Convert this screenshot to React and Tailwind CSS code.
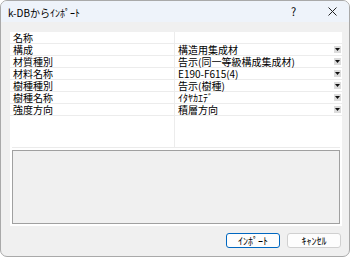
import React from "react";

const rows = [
  ["構成", "構造用集成材"],
  ["材質種別", "告示(同一等級構成集成材)"],
  ["材料名称", "E190-F615(4)"],
  ["樹種種別", "告示(樹種)"],
  ["樹種名称", "ｲﾀﾔｶｴﾃﾞ"],
  ["強度方向", "積層方向"],
];

function Arrow() {
  return (
    <div className="w-[7px] h-[7px] bg-[#dcdcdc] flex items-center justify-center mr-[1px] shrink-0">
      <svg width="5" height="3" viewBox="0 0 5 3">
        <path d="M0 0H5L2.5 3Z" fill="#111" />
      </svg>
    </div>
  );
}

export default function App() {
  const font = { fontFamily: '"Noto Sans CJK JP", "Noto Sans", sans-serif' };
  return (
    <div className="w-[350px] h-[257px] bg-white" style={font}>
      <div className="w-[350px] h-[257px] border border-[#a9a9a9] rounded-[7px] overflow-hidden flex flex-col bg-[#f0f0f0]">
        <div className="h-[21px] bg-[#eef3fa] flex items-center text-[10px] text-black pl-[7px] shrink-0">
          <span className="flex-1 leading-[11px] pt-[1px]">k-DBからｲﾝﾎﾟｰﾄ</span>
          <span className="text-[11px] w-[8px] mr-[29px] leading-[11px]">?</span>
          <svg width="9" height="9" viewBox="0 0 9 9" className="mr-[12px]">
            <path d="M0.5 0.5L8.5 8.5M8.5 0.5L0.5 8.5" stroke="#222" strokeWidth="1" />
          </svg>
        </div>
        <div className="flex-1 flex flex-col pl-[9px] pr-[7px] pt-[10px]">
          <div className="bg-white h-[194px] flex flex-col">
            <div className="h-[115px] flex flex-col text-[10px] leading-[10px] text-black">
              <div className="h-[12px] flex border-b border-[#ececec]">
                <div className="w-[165px] border-r border-[#ececec] pl-[3px] flex items-center">名称</div>
                <div className="flex-1" />
              </div>
              {rows.map(([a, b]) => (
                <div key={a} className="h-[12px] flex border-b border-[#ececec]">
                  <div className="w-[165px] border-r border-[#ececec] pl-[3px] flex items-center">{a}</div>
                  <div className="flex-1 flex items-center pl-[3px]">
                    <span className="flex-1">{b}</span>
                    <Arrow />
                  </div>
                </div>
              ))}
              <div className="flex-1 flex">
                <div className="w-[165px] border-r border-[#ececec]" />
              </div>
            </div>
            <div className="h-[1px] bg-[#ebebeb] mx-[2px]" />
            <div className="flex-1 px-[2px] pt-[2px] pb-[2px]">
              <div className="h-full border border-[#a0a0a0] bg-[#f0f0f0]" />
            </div>
          </div>
          <div className="flex justify-end gap-[7px] mt-[7px] pr-[1px]">
            <div className="w-[54px] h-[15px] border border-[#0067c0] rounded-[3px] bg-[#fdfdfd] flex items-center justify-center text-[10px] leading-[10px]">
              ｲﾝﾎﾟｰﾄ
            </div>
            <div className="w-[54px] h-[15px] border border-[#d0d0d0] rounded-[3px] bg-[#fdfdfd] flex items-center justify-center text-[10px] leading-[10px]">
              ｷｬﾝｾﾙ
            </div>
          </div>
        </div>
      </div>
    </div>
  );
}
